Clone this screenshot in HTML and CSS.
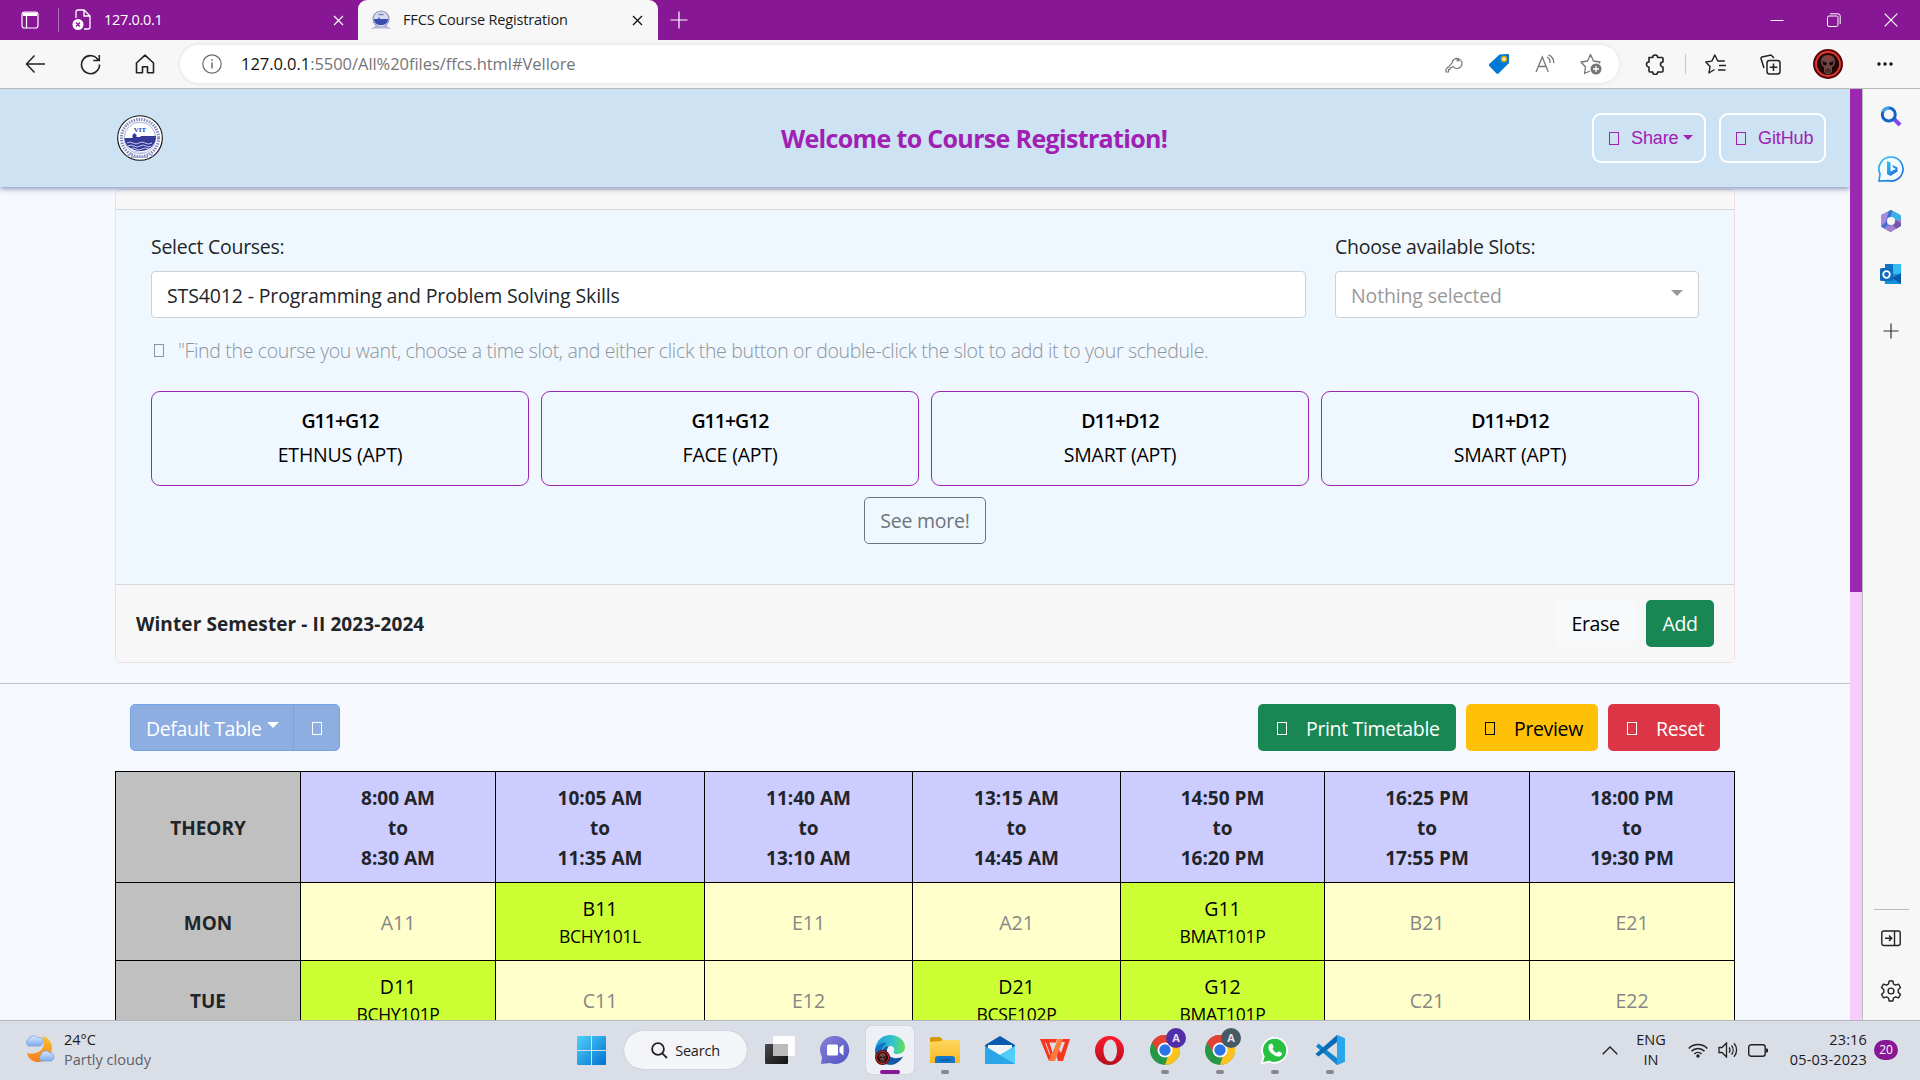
FILE: index.html
```html
<!DOCTYPE html>
<html lang="en">
<head>
<meta charset="utf-8">
<title>FFCS Course Registration</title>
<link rel="stylesheet" href="styles.css">
</head>
<body>
<svg class="defs" width="0" height="0">
  <defs>
    <symbol id="seal" viewBox="0 0 46 46">
      <circle cx="23" cy="23" r="22.3" fill="#fff" stroke="#111" stroke-width="1.1"/>
      <circle cx="23" cy="23" r="18.6" fill="none" stroke="#7d82bf" stroke-width="3" stroke-dasharray="1.4 1.2"/>
      <circle cx="23" cy="23" r="15.8" fill="#fff" stroke="#8a8ec4" stroke-width=".7"/>
      <path d="M7.500 23h8v-3l2-2 2 2v2h4v-1h15.500c0 9-7 15-15.500 15S7.500 31 7.500 23z" fill="#343a96"/>
      <path d="M10 28q3-2 6 0t6 0 6 0 7 0M11 31q3-2 6 0t6 0 6 0 5 0M13 34q3-2 6 0t6 0 7 0M16 37q3-1 6 0t7 0" fill="none" stroke="#c3c7f0" stroke-width="1"/>
      <path d="M10 41l5-3M36 41l-5-3M14 42h17" stroke="#a9add9" stroke-width="2"/>
      <text x="23" y="16.500" text-anchor="middle" class="seal-text">VIT</text>
    </symbol>
    <symbol id="favicon" viewBox="0 0 20 20">
      <circle cx="10" cy="9" r="8" fill="#d9dbef" stroke="#8f93c8" stroke-width="1.200"/>
      <path d="M3 9h4l1-2 1 2h8c0 4-3 6-7 6s-7-2-7-6z" fill="#3a4bb0"/>
      <path d="M0 19l4-3h12l4 3-4-.5H4z" fill="#b4b7d9"/>
      <path d="M7.500 4.500h5" stroke="#8084bf" stroke-width="1.500"/>
    </symbol>
    <symbol id="chrome" viewBox="0 0 30 30">
      <circle cx="15" cy="15" r="15" fill="#279847"/>
      <path d="M2 7.500A15 15 0 0 1 28 7.500L15 15z" fill="#e34133"/>
      <path d="M28 7.500A15 15 0 0 1 15 30L20 15 15 8h13z" fill="#fcc31e"/>
      <path d="M2 7.500L9 18l6-10h13A15 15 0 0 0 2 7.500z" fill="#e34133"/>
      <circle cx="15" cy="15" r="7.500" fill="#fff"/><circle cx="15" cy="15" r="5.700" fill="#2a74e8"/>
    </symbol>
    <symbol id="skull" viewBox="0 0 30 30">
      <circle cx="15" cy="15" r="15" fill="#5a0808"/><circle cx="15" cy="15" r="12" fill="#240606" stroke="#e63a35" stroke-width="1.800"/>
      <path d="M15 6c-5 0-7 3-7 7 0 3 1 4 3 5v5l2 2h4l2-2v-5c2-1 3-2 3-5 0-4-2-7-7-7z" fill="#6f4743"/>
      <path d="M9.500 12l4.500 2-1 2.500-3-1zM20.500 12L16 14l1 2.500 3-1z" fill="#170202"/><path d="M13 20v4M15 19v5M17 20v4" stroke="#240606" stroke-width=".8"/>
      <path d="M15 6l1 3-2 2" stroke="#c22" fill="none"/>
    </symbol>
    <linearGradient id="gWin" x1="0" y1="0" x2="1" y2="1"><stop offset="0" stop-color="#4fd0fb"/><stop offset="1" stop-color="#0272cf"/></linearGradient>
    <linearGradient id="gChat" x1="0" y1="0" x2="1" y2="1"><stop offset="0" stop-color="#8b7fd6"/><stop offset="1" stop-color="#4e55c4"/></linearGradient>
    <linearGradient id="gEdge" x1="0" y1=".3" x2="1" y2=".4"><stop offset="0" stop-color="#1b9de2"/><stop offset=".6" stop-color="#36c6c8"/><stop offset="1" stop-color="#63dd56"/></linearGradient>
    <linearGradient id="gBlack" x1="0" y1="0" x2="1" y2="1"><stop offset="0" stop-color="#4a4a4a"/><stop offset="1" stop-color="#121212"/></linearGradient>
    <linearGradient id="gFold" x1="0" y1="0" x2="0" y2="1"><stop offset="0" stop-color="#ffd75e"/><stop offset="1" stop-color="#f9b825"/></linearGradient>
    <linearGradient id="gMoon" x1="0" y1="0" x2="0" y2="1"><stop offset="0" stop-color="#fbc02d"/><stop offset="1" stop-color="#f57c1f"/></linearGradient>
    <linearGradient id="gCloud" x1="0" y1="0" x2="0" y2="1"><stop offset="0" stop-color="#d9e9ff"/><stop offset="1" stop-color="#7fabec"/></linearGradient>
    <linearGradient id="gOpera" x1="0" y1="0" x2="0" y2="1"><stop offset="0" stop-color="#ff1b2d"/><stop offset="1" stop-color="#b30f1c"/></linearGradient>
    <linearGradient id="gBing" x1="0" y1="0" x2="1" y2="1"><stop offset="0" stop-color="#2fc5ee"/><stop offset="1" stop-color="#2262dd"/></linearGradient>
  </defs>
</svg>

<header class="tabstrip">
  <svg class="ic-workspace" width="18" height="18" viewBox="0 0 18 18" fill="none" stroke="#fff" stroke-width="1.200"><rect x="1" y="1" width="16" height="16" rx="2.500"/><path d="M2 2.500h14M2 4h14" stroke-width="1.800"/><path d="M5.500 5v12"/></svg>
  <span class="tab-sep"></span>
  <svg class="ic-file" width="20" height="22" viewBox="0 0 20 22" fill="none" stroke="#fff" stroke-width="1.300"><path d="M4 9V3a2 2 0 0 1 2-2h6l6 6v11a2 2 0 0 1-2 2h-4M12 1v6h6"/><circle cx="6" cy="15.500" r="5.500" fill="#fff" stroke="none"/><path d="M4 13.500l4 4M8 13.500l-4 4" stroke="#871795"/></svg>
  <span class="tab-title">127.0.0.1</span>
  <svg class="tab-x" width="11" height="11" viewBox="0 0 11 11" stroke="#fff" stroke-width="1.200"><path d="M1 1l9 9M10 1l-9 9"/></svg>
  <div class="tab">
    <svg width="20" height="20"><use href="#favicon"/></svg>
    <span class="tab-title dark">FFCS Course Registration</span>
    <svg class="tab-x2" width="11" height="11" viewBox="0 0 11 11" stroke="#111" stroke-width="1.300"><path d="M1 1l9 9M10 1l-9 9"/></svg>
  </div>
  <svg class="newtab" width="18" height="18" viewBox="0 0 18 18" stroke="#fff" stroke-width="1.200"><path d="M9 .5v17M.5 9h17"/></svg>
  <div class="winctl">
    <svg width="14" height="14" viewBox="0 0 14 14" stroke="#fff"><path d="M.5 7.500h13"/></svg>
    <svg width="14" height="14" viewBox="0 0 14 14" stroke="#fff" fill="none"><rect x=".5" y="3" width="10.500" height="10.500" rx="1.500"/><path d="M3 .8h8a2.200 2.200 0 0 1 2.200 2.200v8"/></svg>
    <svg width="14" height="14" viewBox="0 0 14 14" stroke="#fff" stroke-width="1.200"><path d="M.7.700l12.600 12.600M13.300.7L.7 13.300"/></svg>
  </div>
</header>

<nav class="toolbar">
  <div class="nav-ics">
    <svg width="21" height="20" viewBox="0 0 21 20" fill="none" stroke="#222" stroke-width="1.500"><path d="M20 10H1.500M9.500 1.500L1.500 10l8 8.500"/></svg>
    <svg width="21" height="21" viewBox="0 0 21 21" fill="none" stroke="#222" stroke-width="1.600"><path d="M18.500 6.500A9 9 0 1 0 19.500 10.500M19.300 1v5.500h-6"/></svg>
    <svg width="20" height="20" viewBox="0 0 20 20" fill="none" stroke="#222" stroke-width="1.600"><path d="M1.500 9L10 1.200 18.500 9v9.800h-6v-6h-5v6h-6z" stroke-linejoin="round"/></svg>
  </div>
  <div class="address">
    <svg width="20" height="20" viewBox="0 0 20 20" fill="none" stroke="#6b6b6b" stroke-width="1.200"><circle cx="10" cy="10" r="9.200"/><path d="M10 8.500v6M10 5.300v1.500" stroke-width="1.500"/></svg>
    <span class="url"><b>127.0.0.1</b>:5500/All%20files/ffcs.html#Vellore</span>
    <div class="addr-ics">
      <svg width="18" height="18" viewBox="0 0 18 18" fill="none" stroke="#767676" stroke-width="1.200"><path d="M8 11.500l-1.500 1H5v2H3.500V17H1v-2.800l6-6A5 5 0 1 1 8 11.500z" stroke-linejoin="round"/><circle cx="13" cy="5" r="1"/></svg>
      <svg width="22" height="22" viewBox="0 0 22 22"><path d="M11.500 1.500L20 1a1 1 0 0 1 1 1v8L10.500 20.500a1.500 1.500 0 0 1-2 0L1.300 13a1.500 1.500 0 0 1 0-2z" fill="#0078d4"/><circle cx="16" cy="6" r="2.400" fill="#fff" stroke="#e0a800" stroke-width="1.600"/></svg>
      <svg width="20" height="20" viewBox="0 0 20 20" fill="none" stroke="#767676" stroke-width="1.300"><path d="M1 18L7.300 3l6 15M3.300 12.500h8M12 3a6 6 0 0 1 3 6M13.500.8a9 9 0 0 1 5.300 8.400"/></svg>
      <svg width="22" height="22" viewBox="0 0 22 22" fill="none" stroke="#767676" stroke-width="1.300"><path d="M10 18l-5.500 2.500L5.500 14 1 9l6.500-1L10.500 1.500l3 6.500 6.500 1-1 1.500" stroke-linejoin="round"/><circle cx="16" cy="16" r="5.500" fill="#767676" stroke="none"/><path d="M13 16h6M16 13v6" stroke="#fff"/></svg>
    </div>
  </div>
  <div class="ext-ics">
    <svg class="e1" width="20" height="21" viewBox="0 0 20 21" fill="none" stroke="#222" stroke-width="1.600"><path d="M4 3.500h3.700a2.500 2.500 0 0 1 5 0H17a1 1 0 0 1 1 1V8a2.500 2.500 0 1 0 0 5v4a1 1 0 0 1-1 1h-4.300a2.500 2.500 0 0 1-5 0H5a1 1 0 0 1-1-1v-4a2.500 2.500 0 1 1 0-5z" stroke-linejoin="round"/></svg>
    <span class="ext-sep"></span>
    <svg class="e2" width="21" height="20" viewBox="0 0 21 20" fill="none" stroke="#222" stroke-width="1.400"><path d="M9.500 15.500L4 19l1-6.500L.8 8l6-.9L9.800 1l3 6h7M14 11.500h7M13 16h7.500" stroke-linejoin="round"/></svg>
    <svg class="e3" width="21" height="21" viewBox="0 0 21 21" fill="none" stroke="#222" stroke-width="1.500"><rect x="7" y="6.500" width="13" height="13.500" rx="2.500"/><path d="M13.500 9.500v7.500M9.800 13.200h7.500M4 14L1 4.500A1.500 1.500 0 0 1 2 3L11 1l3 3"/></svg>
    <svg class="e4" width="30" height="30"><use href="#skull"/></svg>
    <svg class="e5" width="16" height="4" viewBox="0 0 16 4" fill="#111"><circle cx="2" cy="2" r="1.700"/><circle cx="8" cy="2" r="1.700"/><circle cx="14" cy="2" r="1.700"/></svg>
  </div>
</nav>

<div class="viewport">
  <main class="page">
    <div class="site-head">
      <svg class="logo" width="46" height="46"><use href="#seal"/></svg>
      <h1>Welcome to Course Registration!</h1>
      <div class="head-btns">
        <button class="hbtn share"><i class="tofu"></i>Share<i class="caret"></i></button>
        <button class="hbtn github"><i class="tofu"></i>GitHub</button>
      </div>
    </div>

    <section class="card">
      <div class="card-top"></div>
      <div class="card-body">
        <div class="fields">
          <div class="field">
            <label>Select Courses:</label>
            <div class="input"><span class="course">STS4012 - Programming and Problem Solving Skills</span></div>
          </div>
          <div class="field">
            <label>Choose available Slots:</label>
            <div class="input select"><span>Nothing selected</span><i class="caret"></i></div>
          </div>
        </div>
        <p class="hint"><i class="tofu"></i><span>"Find the course you want, choose a time slot, and either click the button or double-click the slot to add it to your schedule.</span></p>
        <div class="slots">
          <div class="slot"><b>G11+G12</b><span>ETHNUS (APT)</span></div>
          <div class="slot"><b>G11+G12</b><span>FACE (APT)</span></div>
          <div class="slot"><b>D11+D12</b><span>SMART (APT)</span></div>
          <div class="slot"><b>D11+D12</b><span>SMART (APT)</span></div>
        </div>
        <button class="more">See more!</button>
      </div>
      <div class="card-foot">
        <b>Winter Semester - II 2023-2024</b>
        <button class="btn erase">Erase</button>
        <button class="btn add">Add</button>
      </div>
    </section>

    <div class="rule"></div>

    <div class="actions">
      <div class="group">
        <button class="gbtn g1">Default Table<i class="caret"></i></button>
        <button class="gbtn g2"><i class="tofu"></i></button>
      </div>
      <button class="btn print"><i class="tofu"></i>Print Timetable</button>
      <button class="btn preview"><i class="tofu"></i>Preview</button>
      <button class="btn reset"><i class="tofu"></i>Reset</button>
    </div>

    <table class="tt">
      <colgroup><col class="c0"><col class="c1"><col class="c2"><col class="c3"><col class="c4"><col class="c5"><col class="c6"><col class="c7"></colgroup>
      <tr class="times"><th class="day">THEORY</th><th>8:00 AM<br>to<br>8:30 AM</th><th>10:05 AM<br>to<br>11:35 AM</th><th>11:40 AM<br>to<br>13:10 AM</th><th>13:15 AM<br>to<br>14:45 AM</th><th>14:50 PM<br>to<br>16:20 PM</th><th>16:25 PM<br>to<br>17:55 PM</th><th>18:00 PM<br>to<br>19:30 PM</th></tr>
      <tr><th class="day">MON</th><td>A11</td><td class="on">B11<small>BCHY101L</small></td><td>E11</td><td>A21</td><td class="on">G11<small>BMAT101P</small></td><td>B21</td><td>E21</td></tr>
      <tr><th class="day">TUE</th><td class="on">D11<small>BCHY101P</small></td><td>C11</td><td>E12</td><td class="on">D21<small>BCSE102P</small></td><td class="on">G12<small>BMAT101P</small></td><td>C21</td><td>E22</td></tr>
    </table>
  </main>
  <div class="scroll"><div class="thumb"></div></div>
  <aside class="side">
    <svg width="22" height="22" viewBox="0 0 22 22" fill="none"><path d="M14 13l6 6" stroke="#8548ef" stroke-width="4"/><circle cx="8.800" cy="8.500" r="6.500" stroke="#1464c8" stroke-width="3"/><path d="M3 6a6.500 6.500 0 0 1 6-4" stroke="#41a4e6" stroke-width="3"/></svg>
    <svg width="26" height="26" viewBox="0 0 26 26"><path d="M13 1a12 12 0 1 1-3 23.600L1 25l1-7A12 12 0 0 1 13 1z" fill="#f2fbff" stroke="url(#gBing)" stroke-width="1.700"/><path d="M9 5l3.500 1.500v9L18 13l-3-1.500-1-2.500 5.500 2.500v4L12.500 20 9 18z" fill="url(#gBing)"/></svg>
    <svg width="22" height="22" viewBox="0 0 22 22"><path d="M11 0l8.500 4.500a2 2 0 0 1 1 2V16l-9 5.500a2 2 0 0 1-2 0L2 17.500a2 2 0 0 1-1-2V6.500a2 2 0 0 1 1-2z" fill="#6f7bd8"/><path d="M11 0l8.500 4.500a2 2 0 0 1 1.500 2V13l-6-3-4-3-4 2V2.500z" fill="#3cb0e8"/><path d="M21 10v5.500L11.500 21.500a2 2 0 0 1-2 0L4 18l8-3 4-5z" fill="#a57fd2"/><path d="M16 10l5 3v3l-5 3-3-4z" fill="#7559a8"/><path d="M8 1.500L2 4.500a2 2 0 0 0-1 2v9l4-3 2-4z" fill="#a78be0"/><path d="M9 1l3-1-1 6-4 3v6L4 18l-2-1 4-5z" fill="#4368c8"/><circle cx="11" cy="11" r="4" fill="#f7f7f7"/></svg>
    <svg width="22" height="22" viewBox="0 0 22 22"><path d="M5 1h16v14H5z" fill="#33bdf2"/><path d="M5 1h8v6H5z" fill="#0f74c4"/><path d="M4 11l17 0v10H5z" fill="#1490df"/><path d="M21 10v11l-9-6z" fill="#0b5ca8"/><rect x="0" y="5" width="13" height="13" rx="1.500" fill="#0f6cbd"/><circle cx="6.500" cy="11.500" r="3.300" fill="none" stroke="#fff" stroke-width="1.800"/></svg>
    <svg width="16" height="16" viewBox="0 0 16 16" stroke="#333" stroke-width="1.200"><path d="M8 .5v15M.5 8h15"/></svg>
    <span class="side-line"></span>
    <svg width="20" height="17" viewBox="0 0 20 17" fill="none" stroke="#222" stroke-width="1.400"><rect x=".8" y="1" width="18.400" height="14.500" rx="2"/><path d="M13.500 1v14.500M4 8.200h6.500M8 5.500l2.700 2.700L8 11"/></svg>
    <svg width="22" height="22" viewBox="0 0 22 22" fill="none" stroke="#222" stroke-width="1.400" stroke-linejoin="round"><path d="M9.200 1h3.600l.7 3 2 1.200 3-1 2 3.300L18.200 9.800v2.400l2.300 2.300-2 3.300-3-1-2 1.200-.7 3H9.200l-.7-3-2-1.200-3 1-2-3.300 2.300-2.300V9.800L1.500 7.500l2-3.300 3 1 2-1.200z"/><circle cx="11" cy="11" r="2.900"/></svg>
  </aside>
</div>

<footer class="taskbar">
  <svg class="wx" width="32" height="30" viewBox="0 0 32 30"><path d="M18 2c8 2 11 8 9.500 15C26 24 20 28.500 13 28 8 27.500 4 24 3 19c6 2 17-1 17-10 0-3-1-5-2-7z" fill="url(#gMoon)"/><path d="M4.500 12a4 4 0 0 1 0-7 5.500 5.500 0 0 1 9-1.500A4.200 4.200 0 0 1 16 12z" fill="url(#gCloud)" stroke="#7d9fd6" stroke-width=".8"/><path d="M17 27a4 4 0 0 1 0-6.500 5 5 0 0 1 8.500-2A4.500 4.500 0 0 1 27.500 27z" fill="url(#gCloud)" stroke="#7d9fd6" stroke-width=".8"/></svg>
  <div class="wx-text"><span>24°C</span><span class="muted">Partly cloudy</span></div>
  <div class="apps">
    <svg class="start" width="29" height="29" viewBox="0 0 29 29" fill="url(#gWin)"><path d="M0 1a1 1 0 0 1 1-1h13v14H0zM15 0h13a1 1 0 0 1 1 1v13H15zM0 15h14v14H1a1 1 0 0 1-1-1zM15 15h14v13a1 1 0 0 1-1 1H15z"/></svg>
    <div class="search"><svg width="17" height="17" viewBox="0 0 17 17" fill="none" stroke="#222" stroke-width="1.800"><circle cx="7" cy="7" r="5.900"/><path d="M11.300 11.300L16 16"/></svg><span>Search</span></div>
    <div class="app"><svg width="30" height="30" viewBox="0 0 30 30"><rect x="0" y="9" width="23" height="20" rx="1" fill="url(#gBlack)"/><rect x="8" y="1" width="22" height="20" rx="1" fill="#fdfdfd"/><path d="M8 9h15v12H8z" fill="#bbb"/></svg></div>
    <div class="app"><svg width="30" height="30" viewBox="0 0 30 30"><path d="M15 1a14 14 0 1 1-5 27L1 29l1-7A14 14 0 0 1 15 1z" fill="url(#gChat)"/><rect x="7" y="9.500" width="11" height="11" rx="1.500" fill="#fff"/><path d="M19.500 12.500l4-3v11l-4-3z" fill="#fff"/></svg></div>
    <div class="app tile"><svg width="30" height="30" viewBox="0 0 30 30"><path d="M0 15C1 5 8 0 15 0c9 0 15 6 15 12 0 5-4 7-8 7-3 0-4-1-3-3 1-3-1-5-4-5-5 0-8 4-8 9 0 6 5 10 9 10C6 30 0 24 0 15z" fill="url(#gEdge)"/><path d="M7 20c0-6 3-9 7-9-4 4-2 11 5 12 3 .5 6 0 9-1.500C25 27 20 30 15 30 10 29 7 25 7 20z" fill="#1456a3"/><path d="M0 15C2 9 8 7 12 8c-5 3-7 9-4 16l2 4C4 26 0 21 0 15z" fill="#1372c3"/></svg><svg class="av" width="15" height="15"><use href="#skull"/></svg></div>
    <div class="app run"><svg width="30" height="28" viewBox="0 0 30 28"><path d="M0 3a2 2 0 0 1 2-2h8l3 3v4H0z" fill="#d99708"/><path d="M0 6l11-1 2-1h15a2 2 0 0 1 2 2v20a1 1 0 0 1-1 1H0z" fill="url(#gFold)"/><path d="M5 27v-4a3 3 0 0 1 3-3h14a3 3 0 0 1 3 3v4z" fill="#1276cb"/><path d="M9 24h12" stroke="#0b4e8c"/></svg></div>
    <div class="app"><svg width="30" height="28" viewBox="0 0 30 28"><path d="M0 9L15 0l15 9v4H0z" fill="#0b5cae"/><path d="M3 9h24v10H3z" fill="#f1f4f8"/><path d="M0 10l15 9 15-9v18H0z" fill="#2aa5e8"/><path d="M30 10v18L12 17.500l3 1.500z" fill="#50cdf8"/></svg></div>
    <div class="app"><svg width="30" height="24" viewBox="0 0 30 24"><path d="M21 1h9l-7 22h-5l-3-9 3-4 3 5 4-11h-5z" fill="#f8361f"/><path d="M9 23L18 1h5l-8 22z" fill="#ff7a3d"/><path d="M0 1h17l-1 3.500H9.500l3 10L9 23z" fill="#f8361f"/><path d="M5.500 4.500L10 17" stroke="#dadee7" stroke-width="1"/></svg></div>
    <div class="app"><svg width="29" height="29" viewBox="0 0 29 29"><path fill-rule="evenodd" d="M14.500 0a14.500 14.500 0 1 0 0 29 14.500 14.500 0 0 0 0-29zM15.500 3.500c4 0 6.500 5 6.500 11s-2.500 11-6.500 11-7-5-7-11 3-11 7-11z" fill="url(#gOpera)"/></svg></div>
    <div class="app run"><svg width="30" height="30"><use href="#chrome"/></svg><span class="bdg violet">A</span></div>
    <div class="app run"><svg width="30" height="30"><use href="#chrome"/></svg><span class="bdg slate">A</span></div>
    <div class="app run"><svg width="27" height="27" viewBox="0 0 27 27"><path d="M14 .8A12.500 12.500 0 1 1 8 24.500L.8 26.500l2-7A12.500 12.500 0 0 1 14 .8z" fill="#27c043" stroke="#fff" stroke-width="1.700"/><path d="M9 7l2-.5 1.700 3.500L11.500 12c1 2 2.500 3.200 4.500 4l1.500-1.700 3.500 1.700c0 3-2.500 4-4.500 3.500C12 18.500 8.500 15 7.500 11.500 7.300 9.500 8 8 9 7z" fill="#fff"/></svg></div>
    <div class="app run"><svg width="30" height="30" viewBox="0 0 30 30"><path d="M22 0l8 3.500v23L22 30 1 11.500l2.500-3L22 23z" fill="#1484cf"/><path d="M22 0v7L3.500 21.500.5 19z" fill="#0a6cb5"/><path d="M22 0l8 3.500v23L22 30z" fill="#2aa6ee"/></svg></div>
  </div>
  <div class="tray">
    <svg width="16" height="9" viewBox="0 0 16 9" fill="none" stroke="#222" stroke-width="1.400"><path d="M.7 8.300L8 1l7.300 7.300"/></svg>
    <div class="lang"><span>ENG</span><span>IN</span></div>
    <svg class="wifi" width="20" height="15" viewBox="0 0 20 15" fill="none" stroke="#222" stroke-width="1.500"><path d="M.7 5.500a13 13 0 0 1 18.600 0M3.500 8.300a9 9 0 0 1 13 0M6.300 11a5.400 5.400 0 0 1 7.400 0"/><circle cx="10" cy="13" r="1" fill="#222"/></svg>
    <svg class="vol" width="20" height="16" viewBox="0 0 20 16" fill="none" stroke="#222" stroke-width="1.300"><path d="M1 5.500h3L8.500 1v14L4 10.500H1zM11 5.500a4 4 0 0 1 0 5M13.500 3.500a7 7 0 0 1 0 9M16 1.300a10 10 0 0 1 0 13.400"/></svg>
    <svg class="bat" width="20" height="13" viewBox="0 0 20 13"><rect x=".7" y=".7" width="16.500" height="11.600" rx="2.500" fill="none" stroke="#222" stroke-width="1.400"/><path d="M18 4.500h1a1 1 0 0 1 1 1v2a1 1 0 0 1-1 1h-1z" fill="#222"/></svg>
    <div class="clock"><span>23:16</span><span>05-03-2023</span></div>
    <span class="count">20</span>
  </div>
</footer>
</body>
</html>
```
FILE: styles.css
```css
* { box-sizing: border-box; }
body { margin: 0; width: 1920px; height: 1080px; overflow: hidden; display: flex; flex-direction: column; font-family: "Open Sans", "Noto Sans", sans-serif; color: #212529; }
svg { display: block; flex: none; }
.defs { position: absolute; }
button { font: inherit; margin: 0; padding: 0; border: 0; }
.seal-text { font: bold 7px "Liberation Serif", serif; fill: #343a96; }

.tabstrip { height: 40px; flex: none; background: #871795; display: flex; align-items: center; }
.ic-workspace { margin-left: 21px; }
.tab-sep { width: 1px; height: 24px; background: #b56dbd; margin: 0 13px 0 19px; }
.ic-file { margin-right: 12px; }
.tab-title { color: #fff; font-size: 14.5px; letter-spacing: -.3px; white-space: nowrap; width: 229px; padding-bottom: 2px; }
.tab-x { margin-right: 14px; }
.tab { width: 300px; height: 40px; background: #f7f7f7; border-radius: 9px 9px 0 0; display: flex; align-items: center; padding-left: 13px; }
.tab-title.dark { color: #1b1b1b; margin-left: 12px; width: 229px; letter-spacing: -.15px; }
.newtab { margin-left: 12px; }
.winctl { margin-left: auto; display: flex; gap: 43px; padding-right: 22px; }

.toolbar { height: 49px; flex: none; background: #f7f7f7; border-bottom: 1px solid #b9b9b9; display: flex; align-items: center; }
.nav-ics { display: flex; align-items: center; gap: 34px; padding-left: 25px; width: 180px; }
.address { width: 1439px; height: 38px; border-radius: 19px; background: #fff; box-shadow: 0 0 4px rgba(0,0,0,.1); display: flex; align-items: center; padding: 0 17px 0 22px; }
.url { margin-left: 19px; padding-bottom: 2px; font-size: 16.500px; letter-spacing: -.05px; color: #757575; }
.url b { color: #111; font-weight: 400; }
.addr-ics { margin-left: auto; display: flex; align-items: center; gap: 25px; }
.ext-ics { display: flex; align-items: center; }
.e1 { margin-left: 26px; }
.ext-sep { width: 1px; height: 20px; background: #c4c4c4; margin: 0 19px 0 20px; }
.e3 { margin-left: 34px; }
.e4 { margin-left: 32px; }
.e5 { margin-left: 34px; }

.viewport { height: 931px; flex: none; display: flex; overflow: hidden; }
.page { width: 1850px; background: #f5f8fd; overflow: hidden; }
.scroll { width: 12px; background: #f5ccfb; }
.thumb { height: 503px; background: #9c27b0; }
.side { flex: 1; background: #f7f7f7; border-left: 1px solid #bcbcbc; display: flex; flex-direction: column; align-items: center; padding: 17px 1px 0 0; }
.side svg:nth-of-type(2) { margin-top: 28px; }
.side svg:nth-of-type(3) { margin-top: 28px; }
.side svg:nth-of-type(4) { margin-top: 31px; }
.side svg:nth-of-type(5) { margin-top: 38px; }
.side-line { width: 35px; height: 1px; background: #b9b9b9; margin-top: 570px; }
.side svg:nth-of-type(6) { margin-top: 20px; }
.side svg:nth-of-type(7) { margin-top: 33px; }

.site-head { height: 98px; background: #cde2f3; box-shadow: 0 2px 5px rgba(40,60,130,.5); position: relative; display: flex; align-items: center; padding-left: 117px; }
.logo { margin-bottom: 1px; }
h1 { margin: 0; padding-left: 618px; width: 1429px; font-size: 25px; font-weight: 700; letter-spacing: -.66px; color: #a020b4; white-space: nowrap; }
.head-btns { display: flex; gap: 13px; }
.hbtn { height: 50px; border: 2px solid #fff; border-radius: 9px; background: none; color: #a020b4; font: 18px "Liberation Sans", Arial, sans-serif; letter-spacing: -.1px; display: flex; align-items: center; padding-left: 15px; }
.share { width: 114px; }
.github { width: 107px; }
.tofu { display: inline-block; width: 10px; height: 13px; border: 1px solid currentColor; flex: none; }
.hbtn .tofu { margin-right: 12px; }
.caret { width: 0; height: 0; border: 6px solid transparent; border-top-color: currentColor; border-bottom: 0; flex: none; }
.hbtn .caret { margin: -2px 0 0 4px; border-width: 5px 5px 0; }

.card { width: 1620px; height: 474px; margin: 2px 0 0 115px; border: 1px solid #efdfe2; border-radius: 5px; background: #f0f8ff; }
.card-top { height: 20px; background: #f7f7f7; border-bottom: 1px solid #d5d8da; border-radius: 4px 4px 0 0; }
.card-body { height: 374px; padding: 23px 35px 0; }
.fields { display: grid; grid-template-columns: 1155px 364px; gap: 29px; height: 85px; }
label { display: block; height: 38px; line-height: 27px; font-size: 19.500px; letter-spacing: -.27px; }
.input { height: 47px; border: 1px solid #ced0d4; border-radius: 4px; background: #fff; padding: 2px 15px 0; display: flex; align-items: center; font-size: 19.500px; letter-spacing: -.14px; }
.select { color: #999; justify-content: space-between; }
.select .caret { margin-top: -6px; }
.hint { height: 30px; margin: 17px 0 0; padding-left: 3px; display: flex; align-items: center; font-size: 19.500px; font-weight: 300; letter-spacing: -.33px; color: #8d949b; white-space: nowrap; }
.hint .tofu { margin-right: 14px; }
.slots { display: grid; grid-template-columns: repeat(4, 378px); gap: 12px; margin-top: 26px; }
.slot { height: 95px; border: 1px solid #9c27b0; border-radius: 9px; color: #000; text-align: center; display: flex; flex-direction: column; padding-top: 12px; line-height: 34px; font-size: 19.500px; letter-spacing: -.2px; }
.slot b { font-weight: 600; letter-spacing: -1px; }
.more { display: block; width: 122px; height: 47px; margin: 11px auto 0; border: 1px solid #6c757d; border-radius: 5px; background: none; color: #6c757d; font-size: 19.500px; letter-spacing: -.25px; }
.card-foot { height: 78px; background: #f7f7f7; border-top: 1px solid #d5d8da; border-radius: 0 0 4px 4px; display: flex; align-items: center; padding: 0 20px 0 20px; }
.card-foot b { margin-right: auto; font-size: 19px; font-weight: 700; letter-spacing: .1px; }
.btn { height: 47px; border-radius: 5px; font-size: 19.500px; letter-spacing: -.35px; color: #fff; display: flex; align-items: center; white-space: nowrap; }
.erase { width: 79px; background: #f8f9fa; color: #000; justify-content: center; margin-right: 11px; }
.add { width: 68px; background: #198754; justify-content: center; }

.rule { height: 1px; background: #bfc3c9; margin-top: 20px; }
.actions { margin: 20px 130px 0; display: flex; }
.group { display: flex; margin-right: auto; }
.gbtn { height: 47px; background: #8eade1; color: #fff; border: 1px solid #73a4e8; display: flex; align-items: center; font-size: 19.500px; letter-spacing: -.4px; padding-top: 1px; }
.g1 { width: 164px; border-radius: 5px 0 0 5px; padding-left: 15px; }
.g1 .caret { margin: -6px 0 0 5px; }
.g2 { width: 47px; margin-left: -1px; border-radius: 0 5px 5px 0; justify-content: center; }
.print, .preview, .reset { padding-top: 1px; }
.btn .tofu { margin: 0 19px 0 19px; }
.print { width: 198px; background: #198754; }
.preview { width: 132px; background: #ffc107; color: #000; margin: 0 10px; }
.reset { width: 112px; background: #dc3545; }

.tt { width: 1620px; margin: 20px 0 0 115px; table-layout: fixed; border-collapse: collapse; font-size: 19.500px; }
.c0 { width: 185px; } .c1 { width: 195px; } .c2 { width: 209px; } .c3 { width: 208px; } .c4 { width: 208px; } .c5 { width: 204px; } .c6 { width: 205px; } .c7 { width: 205px; }
.tt th, .tt td { height: 78px; padding: 2px 0 0; border: 1px solid #000; text-align: center; vertical-align: middle; line-height: 28px; }
.tt td { background: #ffffcc; color: #868686; }
.tt .times th { height: 111px; background: #ccccff; line-height: 30px; }
.tt th { font-size: 19px; font-weight: 700; }
.tt th.day, .tt .times th.day { background: #c0c0c0; }
.tt td.on { background: #ccff33; color: #000; }
.tt small { display: block; font-size: 17.500px; line-height: 27px; letter-spacing: -.3px; }

.taskbar { height: 60px; flex: none; background: #dadee7; border-top: 1px solid #b3b6bf; display: flex; align-items: center; padding-bottom: 1px; }
.wx { margin-left: 24px; margin-top: -3px; }
.wx-text { margin-left: 8px; width: 513px; display: flex; flex-direction: column; font-size: 14.500px; line-height: 20px; color: #1b1b1b; padding-bottom: 1px; }
.wx-text .muted { color: #5d6066; }
.apps { display: flex; align-items: center; }
.search { width: 123px; height: 38px; margin: 0 5px 0 18px; border-radius: 19px; background: #f4f5f8; box-shadow: 0 0 1px #999; display: flex; align-items: center; justify-content: center; gap: 7px; font-size: 14.500px; letter-spacing: -.2px; color: #1b1b1b; }
.app { width: 55px; height: 50px; display: flex; align-items: center; justify-content: center; position: relative; }
.tile { width: 48px; height: 48px; margin: 0 3px 0 4px; background: #eef0f5; border-radius: 5px; box-shadow: 0 0 1px #999; }
.tile::after, .run::after { content: ""; position: absolute; bottom: 0; left: 14px; width: 20px; height: 4px; border-radius: 2px; background: #871795; }
.run::after { bottom: 1px; left: 24px; width: 8px; background: #85878c; }
.av { position: absolute; left: 9px; top: 24px; }
.bdg { position: absolute; left: 29px; top: 3px; width: 20px; height: 20px; border-radius: 50%; color: #e6e0f5; font-size: 11px; font-weight: 700; line-height: 20px; text-align: center; }
.violet { background: #512da8; }
.slate { background: #455a64; }
.tray { margin-left: auto; display: flex; align-items: center; padding-right: 22px; color: #1b1b1b; font-size: 14.500px; line-height: 20px; }
.lang { width: 40px; margin-left: 13px; display: flex; flex-direction: column; text-align: center; }
.wifi { margin-left: 17px; }
.vol { margin-left: 10px; }
.bat { margin-left: 10px; }
.clock { width: 92px; margin-left: 7px; display: flex; flex-direction: column; text-align: right; letter-spacing: .15px; }
.count { width: 24px; height: 20px; margin-left: 7px; border-radius: 10px; background: #871795; color: #fff; font-size: 12px; line-height: 20px; text-align: center; }
```
